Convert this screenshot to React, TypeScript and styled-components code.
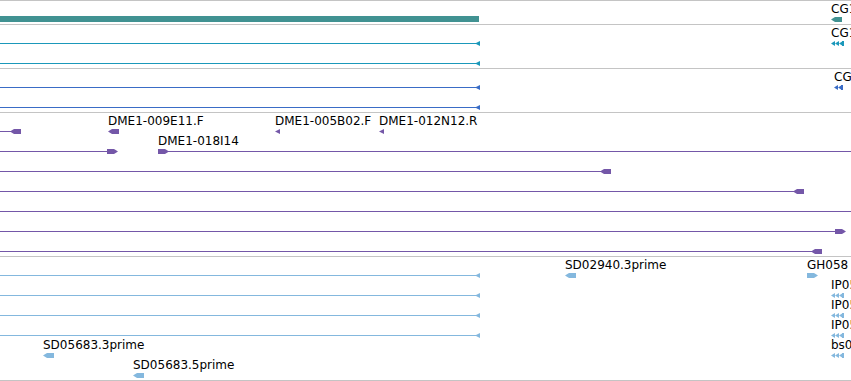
import styled, {createGlobalStyle} from 'styled-components';

const GlobalStyle = createGlobalStyle`
  body {
    margin: 0;
    background: #fff;
    font-family: 'DejaVu Sans', 'Liberation Sans', sans-serif;
  }
`;

type Dir = 'left' | 'right';

type Feature =
  | {kind: 'line'; row: number; x: number; w: number}
  | {kind: 'bar'; row: number; x: number; w: number}
  | {kind: 'arrow'; row: number; x: number; dir: Dir}
  | {kind: 'head'; row: number; x: number}
  | {kind: 'multi'; row: number; x: number; n: number};

interface Label {
  text: string;
  row: number;
  x: number;
}

interface TrackData {
  height: number;
  color: string;
  features: Feature[];
  labels: Label[];
}

const ROW = 20;
const lineY = (row: number) => 18 + row * ROW;

const tracks: TrackData[] = [
  {
    height: 23,
    color: '#419292',
    features: [
      {kind: 'bar', row: 0, x: 0, w: 479},
      {kind: 'arrow', row: 0, x: 831, dir: 'left'},
    ],
    labels: [{text: 'CG1', row: 0, x: 831}],
  },
  {
    height: 43,
    color: '#1b98ba',
    features: [
      {kind: 'line', row: 0, x: 0, w: 476},
      {kind: 'head', row: 0, x: 475},
      {kind: 'line', row: 1, x: 0, w: 476},
      {kind: 'head', row: 1, x: 475},
      {kind: 'multi', row: 0, x: 831, n: 3},
    ],
    labels: [{text: 'CG1', row: 0, x: 831}],
  },
  {
    height: 43,
    color: '#3a6cc6',
    features: [
      {kind: 'line', row: 0, x: 0, w: 476},
      {kind: 'head', row: 0, x: 475},
      {kind: 'line', row: 1, x: 0, w: 476},
      {kind: 'head', row: 1, x: 475},
      {kind: 'multi', row: 0, x: 834, n: 2},
    ],
    labels: [{text: 'CG', row: 0, x: 834}],
  },
  {
    height: 143,
    color: '#7457a8',
    features: [
      {kind: 'line', row: 0, x: 0, w: 11},
      {kind: 'arrow', row: 0, x: 10, dir: 'left'},
      {kind: 'arrow', row: 0, x: 108, dir: 'left'},
      {kind: 'head', row: 0, x: 275},
      {kind: 'head', row: 0, x: 379},
      {kind: 'line', row: 1, x: 0, w: 108},
      {kind: 'arrow', row: 1, x: 107, dir: 'right'},
      {kind: 'arrow', row: 1, x: 158, dir: 'right'},
      {kind: 'line', row: 1, x: 167, w: 684},
      {kind: 'line', row: 2, x: 0, w: 601},
      {kind: 'arrow', row: 2, x: 600, dir: 'left'},
      {kind: 'line', row: 3, x: 0, w: 794},
      {kind: 'arrow', row: 3, x: 793, dir: 'left'},
      {kind: 'line', row: 4, x: 0, w: 851},
      {kind: 'line', row: 5, x: 0, w: 836},
      {kind: 'arrow', row: 5, x: 835, dir: 'right'},
      {kind: 'line', row: 6, x: 0, w: 812},
      {kind: 'arrow', row: 6, x: 811, dir: 'left'},
    ],
    labels: [
      {text: 'DME1-009E11.F', row: 0, x: 108},
      {text: 'DME1-005B02.F', row: 0, x: 275},
      {text: 'DME1-012N12.R', row: 0, x: 379},
      {text: 'DME1-018I14', row: 1, x: 158},
    ],
  },
  {
    height: 123,
    color: '#84b8de',
    features: [
      {kind: 'line', row: 0, x: 0, w: 476},
      {kind: 'head', row: 0, x: 475},
      {kind: 'line', row: 1, x: 0, w: 476},
      {kind: 'head', row: 1, x: 475},
      {kind: 'line', row: 2, x: 0, w: 476},
      {kind: 'head', row: 2, x: 475},
      {kind: 'line', row: 3, x: 0, w: 476},
      {kind: 'head', row: 3, x: 475},
      {kind: 'arrow', row: 0, x: 565, dir: 'left'},
      {kind: 'arrow', row: 0, x: 807, dir: 'right'},
      {kind: 'multi', row: 1, x: 831, n: 3},
      {kind: 'multi', row: 2, x: 831, n: 3},
      {kind: 'multi', row: 3, x: 831, n: 3},
      {kind: 'multi', row: 4, x: 831, n: 3},
      {kind: 'arrow', row: 4, x: 43, dir: 'left'},
      {kind: 'arrow', row: 5, x: 133, dir: 'left'},
    ],
    labels: [
      {text: 'SD02940.3prime', row: 0, x: 565},
      {text: 'GH058', row: 0, x: 807},
      {text: 'IP05', row: 1, x: 831},
      {text: 'IP05', row: 2, x: 831},
      {text: 'IP05', row: 3, x: 831},
      {text: 'bs0', row: 4, x: 831},
      {text: 'SD05683.3prime', row: 4, x: 43},
      {text: 'SD05683.5prime', row: 5, x: 133},
    ],
  },
];

const Browser = styled.div`
  width: 851px;
  display: flex;
  flex-direction: column;
  border-top: 1px solid #c4c4c4;
`;

const Track = styled.div<{$height: number}>`
  position: relative;
  height: ${p => p.$height}px;
  border-bottom: 1px solid #c4c4c4;
  overflow: hidden;
`;

const Line = styled.div.attrs<{$x: number; $y: number; $w: number}>(p => ({
  style: {left: p.$x, top: p.$y, width: p.$w},
}))<{$color: string}>`
  position: absolute;
  height: 1px;
  background: ${p => p.$color};
`;

const Bar = styled(Line)`
  height: 6px;
`;

const Glyph = styled.svg.attrs<{$x: number; $y: number}>(p => ({
  style: {left: p.$x, top: p.$y},
}))`
  position: absolute;
  display: block;
  overflow: visible;
`;

const Name = styled.span.attrs<{$x: number; $y: number}>(p => ({
  style: {left: p.$x, top: p.$y},
}))`
  position: absolute;
  font-size: 12px;
  line-height: 14px;
  color: #000;
  white-space: nowrap;
`;

const FeatureGlyph = ({f, color}: {f: Feature; color: string}) => {
  const y = lineY(f.row);
  switch (f.kind) {
    case 'line':
      return <Line $x={f.x} $y={y} $w={f.w} $color={color} />;
    case 'bar':
      return <Bar $x={f.x} $y={y - 3} $w={f.w} $color={color} />;
    case 'arrow':
      return (
        <Glyph $x={f.x} $y={y - 2} width={11} height={6}>
          <polygon
            fill={color}
            points={f.dir == 'left' ? '0,2.5 4,0 11,0 11,5 4,5' : '0,0 7,0 11,2.5 7,5 0,5'}
          />
        </Glyph>
      );
    case 'head':
      return (
        <Glyph $x={f.x} $y={y - 2} width={5} height={6}>
          <polygon fill={color} points="0,2.5 5,0 5,5" />
        </Glyph>
      );
    case 'multi': {
      const w = f.n * 4 + 1;
      return (
        <Glyph $x={f.x} $y={y - 2} width={w} height={6}>
          {Array.from({length: f.n}).map((_, i) => (
            <polygon key={i} fill={color} points={`${i * 4},2.5 ${i * 4 + 4},0 ${i * 4 + 4},5`} />
          ))}
          <rect x={w - 2} y={0} width={2} height={5} fill={color} />
        </Glyph>
      );
    }
  }
};

export default function App() {
  return (
    <>
      <GlobalStyle />
      <Browser>
        {tracks.map((t, i) => (
          <Track key={i} $height={t.height}>
            {t.features.map((f, j) => (
              <FeatureGlyph key={j} f={f} color={t.color} />
            ))}
            {t.labels.map((l, j) => (
              <Name key={j} $x={l.x} $y={1 + l.row * ROW}>
                {l.text}
              </Name>
            ))}
          </Track>
        ))}
      </Browser>
    </>
  );
}
